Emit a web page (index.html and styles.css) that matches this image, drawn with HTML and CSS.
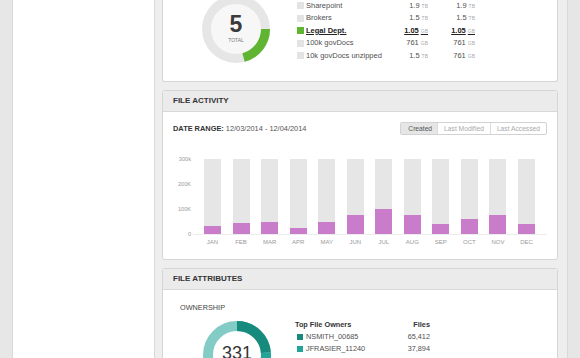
FILE: index.html
```html
<!DOCTYPE html>
<html lang="en">
<head>
  <meta charset="UTF-8">
  <title>Storage Overview</title>
  <link rel="stylesheet" href="styles.css">
</head>
<body>
  <div class="layout">
    <div class="gutter"></div>
    <div class="sidebar"></div>

    <div class="main">
      <!-- sources summary (scrolled, top is off screen) -->
      <div class="panel panel-cut">
        <div class="summary">
          <svg class="donut" width="68" height="68" viewBox="0 0 68 68">
            <circle cx="34" cy="34" r="29.5" fill="#f7f7f7" stroke="#e6e6e6" stroke-width="9"/>
            <circle cx="34" cy="34" r="29.5" fill="none" stroke="#5fb532" stroke-width="9" stroke-dasharray="38.6 200"/>
            <text class="donut-num" x="34" y="37" text-anchor="middle">5</text>
            <text class="donut-label" x="34" y="46.5" text-anchor="middle">TOTAL</text>
          </svg>

          <div class="legend">
            <span class="sq"></span><span class="name">Sharepoint</span>
            <span class="val">1.9<small>TB</small></span><span class="val">1.9<small>TB</small></span>

            <span class="sq"></span><span class="name">Brokers</span>
            <span class="val">1.5<small>TB</small></span><span class="val">1.5<small>TB</small></span>

            <span class="sq sq-green"></span><span class="name active"><u>Legal Dept.</u></span>
            <span class="val active"><u>1.05<small>GB</small></u></span><span class="val active"><u>1.05<small>GB</small></u></span>

            <span class="sq"></span><span class="name">100k govDocs</span>
            <span class="val">761<small>GB</small></span><span class="val">761<small>GB</small></span>

            <span class="sq"></span><span class="name">10k govDocs unzipped</span>
            <span class="val">1.5<small>TB</small></span><span class="val">761<small>GB</small></span>
          </div>
        </div>
      </div>

      <!-- file activity -->
      <div class="panel">
        <div class="panel-head">FILE ACTIVITY</div>
        <div class="panel-body activity">
          <div class="range-row">
            <div class="range"><b>DATE RANGE:</b> 12/03/2014 - 12/04/2014</div>
            <div class="toggle">
              <span class="on">Created</span>
              <span>Last Modified</span>
              <span>Last Accessed</span>
            </div>
          </div>

          <div class="chart">
            <div class="y-axis">
              <span>300k</span>
              <span>200K</span>
              <span>100K</span>
              <span>0</span>
            </div>
            <div class="plot">
              <div class="bars">
                <div class="bar"><div class="fill" style="height:10.7%"></div></div>
                <div class="bar"><div class="fill" style="height:14.7%"></div></div>
                <div class="bar"><div class="fill" style="height:16.4%"></div></div>
                <div class="bar"><div class="fill" style="height:8.4%"></div></div>
                <div class="bar"><div class="fill" style="height:16.4%"></div></div>
                <div class="bar"><div class="fill" style="height:25%"></div></div>
                <div class="bar"><div class="fill" style="height:33.3%"></div></div>
                <div class="bar"><div class="fill" style="height:25%"></div></div>
                <div class="bar"><div class="fill" style="height:13%"></div></div>
                <div class="bar"><div class="fill" style="height:19.6%"></div></div>
                <div class="bar"><div class="fill" style="height:25%"></div></div>
                <div class="bar"><div class="fill" style="height:13%"></div></div>
              </div>
              <div class="months">
                <span>JAN</span><span>FEB</span><span>MAR</span><span>APR</span>
                <span>MAY</span><span>JUN</span><span>JUL</span><span>AUG</span>
                <span>SEP</span><span>OCT</span><span>NOV</span><span>DEC</span>
              </div>
            </div>
          </div>
        </div>
      </div>

      <!-- file attributes -->
      <div class="panel">
        <div class="panel-head">FILE ATTRIBUTES</div>
        <div class="panel-body attributes">
          <div class="sub-title">OWNERSHIP</div>
          <div class="ownership">
            <svg class="donut donut-owners" width="68" height="68" viewBox="0 0 68 68">
              <circle cx="34" cy="34" r="29" fill="#fff" stroke="#82ccc5" stroke-width="10"/>
              <circle cx="34" cy="34" r="29" fill="none" stroke="#168a7d" stroke-width="10" stroke-dasharray="43 200" transform="rotate(-90 34 34)"/>
              <circle cx="34" cy="34" r="29" fill="none" stroke="#22a496" stroke-width="10" stroke-dasharray="18 200" stroke-dashoffset="-43" transform="rotate(-90 34 34)"/>
              <text class="owners-num" x="34" y="37.5" text-anchor="middle">331</text>
            </svg>

            <div class="owners">
              <span class="th th-name">Top File Owners</span><span class="th num">Files</span>

              <span class="sq sq-teal1"></span><span>NSMITH_00685</span><span class="num">65,412</span>
              <span class="sq sq-teal2"></span><span>JFRASIER_11240</span><span class="num">37,894</span>
              <span class="sq sq-teal3"></span><span>ELBANA_33107</span><span class="num">15,483</span>
            </div>
          </div>
        </div>
      </div>
    </div>

    <div class="rail"></div>
  </div>
</body>
</html>
```

FILE: styles.css
```css
* {
  box-sizing: border-box;
}

body {
  margin: 0;
  background-color: #eeeeee;
  font-family: "Liberation Sans", Arial, sans-serif;
  color: #444;
}

.layout {
  display: flex;
  height: 358px;
  overflow: hidden;
}

.gutter {
  width: 13px;
  background-color: #e7e7e7;
  border-right: 1px solid #d9d9d9;
}

.sidebar {
  width: 142px;
  background-color: #fff;
  border-right: 1px solid #d9d9d9;
}

.main {
  flex: 1;
  padding: 0 9px 0 7px;
}

.rail {
  width: 13px;
  background-color: #e6e6e6;
  border-left: 1px solid #d9d9d9;
}

/* panels */
.panel {
  background-color: #fff;
  border: 1px solid #d5d5d5;
  border-radius: 3px;
  margin-bottom: 8px;
}

.panel-cut {
  height: 82px;
  border-top: none;
  border-radius: 0 0 3px 3px;
  overflow: hidden;
}

.panel-head {
  height: 21px;
  line-height: 20px;
  padding-left: 10px;
  background-color: #ebebeb;
  border-bottom: 1px solid #d8d8d8;
  border-radius: 3px 3px 0 0;
  font-size: 8px;
  font-weight: bold;
  color: #333;
}

.panel-body {
  padding: 10px 10px 13px;
}

/* summary */
.summary {
  display: flex;
  align-items: flex-end;
  height: 100%;
  padding: 0 0 18px 39px;
}

.donut {
  flex: none;
  display: block;
}

.donut-num {
  font-size: 23px;
  font-weight: bold;
  fill: #3b3b3b;
}

.donut-label {
  font-size: 5px;
  fill: #777;
}

.legend {
  display: grid;
  grid-template-columns: 9px 82px 40px 47px;
  align-items: center;
  margin: 0 0 1px 27px;
  font-size: 7.5px;
  line-height: 12.5px;
  color: #505050;
}

.sq {
  width: 6.6px;
  height: 6.6px;
  background-color: #e3e3e3;
}

.sq-green {
  background-color: #5fb532;
}

.val {
  text-align: right;
}

.val small {
  margin-left: 2px;
  font-size: 5px;
  color: #aaa;
}

.active {
  font-weight: bold;
  color: #222;
}

.active small {
  font-weight: normal;
}

/* file activity */
.range-row {
  display: flex;
  justify-content: space-between;
  align-items: center;
  height: 13px;
}

.range {
  font-size: 7.4px;
  color: #555;
}

.range b {
  color: #333;
}

.toggle {
  display: flex;
  border: 1px solid #d2d2d2;
  border-radius: 2px;
}

.toggle span {
  padding: 0 6px;
  line-height: 11px;
  font-size: 6.7px;
  color: #aaa;
  border-left: 1px solid #dcdcdc;
}

.toggle .on {
  border-left: none;
  padding: 0 5px 0 7px;
  background-color: #e6e6e6;
  color: #555;
}

.chart {
  display: flex;
  margin-top: 20px;
}

.y-axis {
  width: 18px;
  height: 83px;
  display: flex;
  flex-direction: column;
  justify-content: space-between;
  text-align: right;
  font-size: 5.6px;
  line-height: 8px;
  color: #999;
}

.plot {
  flex: 1;
  margin-left: 2px;
  padding-top: 4px;
}

.bars,
.months {
  display: flex;
  gap: 11.55px;
  padding-left: 11px;
}

.bars {
  height: 76px;
  border-bottom: 1px solid #ececec;
}

.bar {
  width: 17px;
  height: 75px;
  display: flex;
  align-items: flex-end;
  background-color: #e6e6e6;
}

.fill {
  width: 100%;
  background-color: #c87cca;
}

.months {
  margin-top: 3px;
}

.months span {
  width: 17px;
  text-align: center;
  white-space: nowrap;
  font-size: 6px;
  line-height: 8px;
  color: #999;
}

/* file attributes */
.attributes {
  padding: 13px 17px;
}

.sub-title {
  font-size: 7.3px;
  line-height: 9px;
  color: #444;
}

.ownership {
  display: flex;
  align-items: flex-start;
  margin-top: 8.5px;
  padding-left: 23px;
  gap: 24px;
}

.owners-num {
  font-size: 18px;
  fill: #333;
}

.owners {
  display: grid;
  grid-template-columns: 11px 80px 44px;
  align-items: center;
  margin-top: -2px;
  font-size: 7.3px;
  line-height: 12.3px;
  color: #505050;
}

.owners .sq {
  width: 6.5px;
  height: 6.5px;
  margin-left: 1.5px;
}

.th {
  font-weight: bold;
  color: #333;
}

.th-name {
  grid-column: 1 / 3;
}

.num {
  text-align: right;
}

.sq-teal1 {
  background-color: #168a7d;
}

.sq-teal2 {
  background-color: #22a496;
}

.sq-teal3 {
  background-color: #3fc1b5;
}
```
